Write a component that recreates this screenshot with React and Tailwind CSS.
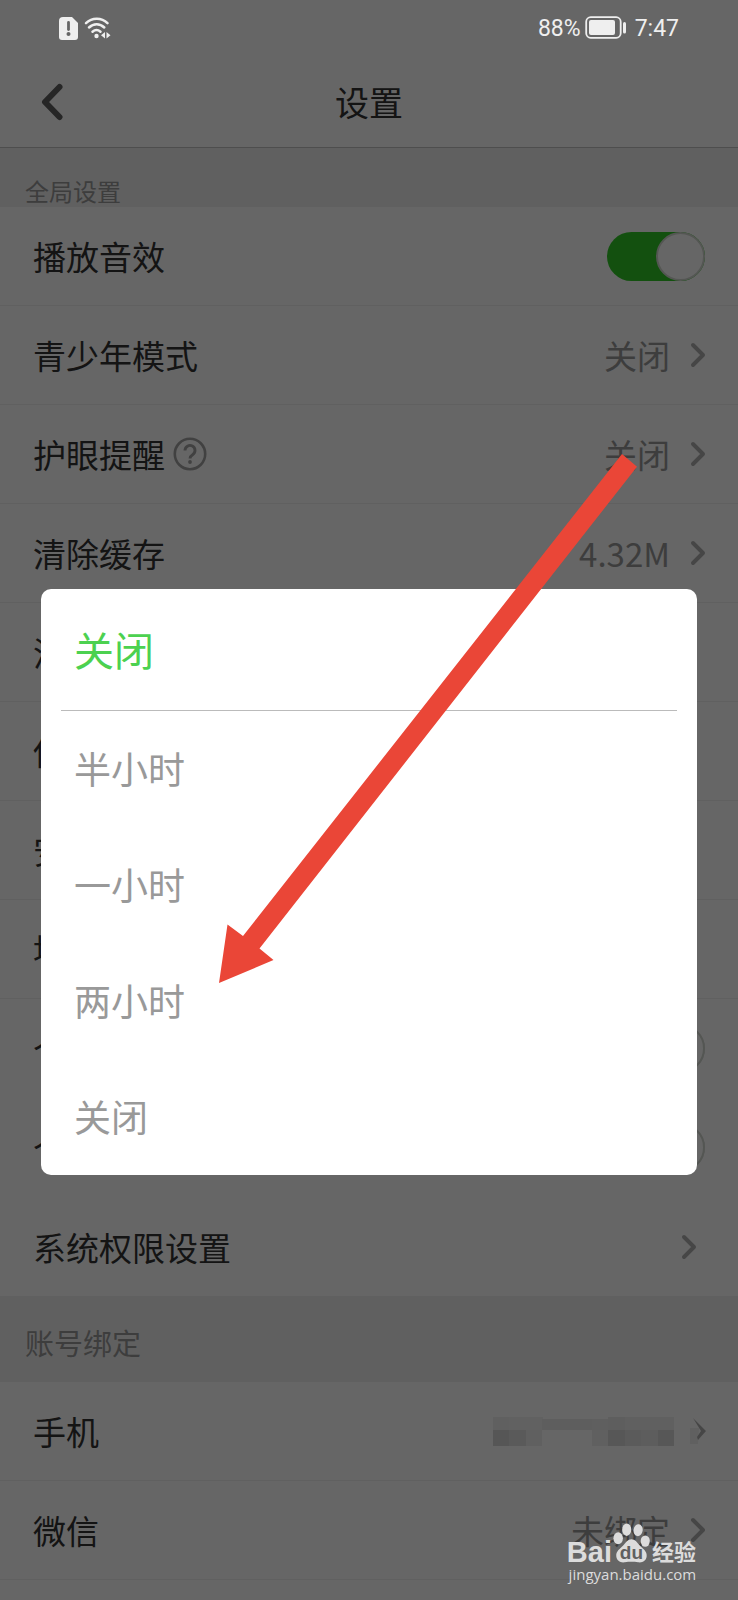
import { useState } from "react";

const generalRows = [
  { label: "播放音效", type: "switch", on: true },
  { label: "青少年模式", value: "关闭" },
  { label: "护眼提醒", value: "关闭", help: true },
  { label: "清除缓存", value: "4.32M" },
  { label: "消", inset: true },
  { label: "使", inset: true },
  { label: "安", inset: true },
  { label: "地", inset: true },
  { label: "个", type: "switch", plain: true },
  { label: "个", type: "switch", plain: true },
  { label: "系统权限设置", inset: true, plain: true },
];

const timeOptions = ["半小时", "一小时", "两小时", "关闭"];

const maskTop = ["#efefef", "#f3f3f3", "#f3f3f3", "#eaeaea", "#eaeaea", "#eaeaea", "#eeeeee", "#eaeaea", "#f0f0f0", "#f1f1f1", "#efefef"];
const maskBottom = ["#d6d6d6", "#e0e0e0", "#efefef", "#ffffff", "#ffffff", "#ffffff", "#f0f0f0", "#d9d9d9", "#e3e3e3", "#e9e9e9", "#dadada"];

const StatusBar = () => (
  <div className="absolute inset-x-0 top-0 z-20 flex h-14 items-center justify-between px-[59px] font-[Roboto,'Noto_Sans_CJK_SC',sans-serif] text-[23px] text-[#efefef]">
    <div className="flex items-center gap-1.5">
      <svg width="19" height="23" viewBox="0 0 19 23">
        <path d="M4 0h9l6 6v14a3 3 0 0 1-3 3H3a3 3 0 0 1-3-3V4a4 4 0 0 1 4-4Z" fill="#efefef" />
        <path d="M9.500 5.500v7" stroke="#666" strokeWidth="2.800" strokeLinecap="round" />
        <circle cx="9.500" cy="17" r="2" fill="#666" />
      </svg>
      <svg width="27" height="23" viewBox="0 0 27 23" fill="none" stroke="#efefef" strokeWidth="2.500" strokeLinecap="round">
        <path d="M2 6.200c6-6 15.500-6 21.500 0" />
        <path d="M5 10.500c4.500-4.300 10.800-4.300 15.300 0" />
        <path d="M8.500 14.700c2.500-2.200 5.500-2.200 8 0" />
        <circle cx="12.500" cy="19" r="2.200" fill="#efefef" stroke="none" />
        <path d="M21 15v6.500l-4-3.250zM22.500 15v6.500l4-3.250z" fill="#efefef" stroke="none" />
      </svg>
    </div>
    <div className="flex items-center">
      <span className="pt-0.5">88%</span>
      <svg className="ml-1 mr-2" width="42" height="24" viewBox="0 0 42 24">
        <rect x="1.200" y="1.200" width="34.500" height="20.600" rx="4.500" fill="none" stroke="#efefef" strokeWidth="1.800" />
        <rect x="4" y="4" width="26" height="15" rx="2" fill="#efefef" />
        <rect x="38" y="6" width="3" height="11.500" rx="1.500" fill="#efefef" />
      </svg>
      <span className="pt-0.5">7:47</span>
    </div>
  </div>
);

const Chevron = () => (
  <svg className="shrink-0" width="16" height="26" viewBox="0 0 16 26" fill="none" stroke="#b0b0b0" strokeWidth="4" strokeLinecap="round" strokeLinejoin="round">
    <path d="M3 3 13 13 3 23" />
  </svg>
);

// Flecha de la fila con el número oculto, tapada en parte por el mosaico
const MaskedChevron = () => (
  <svg className="shrink-0" width="16" height="26" viewBox="0 0 16 26">
    <path d="M0 10h9l-1 16H0Z" fill="#f0f0f0" />
    <path d="M3 0 16 13 8 22 7 19 11 13Z" fill="#b0b0b0" />
  </svg>
);

const HelpIcon = () => (
  <svg width="34" height="34" viewBox="0 0 34 34" fill="none" stroke="#a3a3a3">
    <circle cx="17" cy="17" r="15.200" strokeWidth="2.600" />
    <path d="M12 13.500a5 5 0 1 1 7.600 4.200c-1.900 1.200-2.600 1.900-2.600 3.800" strokeWidth="2.900" />
    <circle cx="17" cy="25" r="1.900" fill="#a3a3a3" stroke="none" />
  </svg>
);

const Switch = ({ label, defaultChecked }) => (
  <label className="relative mr-px block h-[49px] w-[98px]">
    <input type="checkbox" role="switch" aria-label={label} defaultChecked={defaultChecked} className="absolute inset-0 h-full w-full appearance-none rounded-full border-2 border-[#d8d8d8] bg-white checked:border-0 checked:bg-[#30c826]" />
    <span className="pointer-events-none absolute right-0 top-0 h-[49px] w-[49px] rounded-full border-2 border-[#d3d8d0] bg-white"></span>
  </label>
);

const MaskedNumber = () => (
  <svg width="181" height="30" viewBox="0 0 181 30" shapeRendering="crispEdges">
    {maskTop.map((color, i) => (
      <rect key={i} x={i * 16.45} y={i > 2 && i < 7 ? 3 : 1} width="16.600" height="13" fill={color} />
    ))}
    {maskBottom.map((color, i) => (
      <rect key={i} x={i * 16.45} y="14" width="16.600" height="16" fill={color} />
    ))}
  </svg>
);

const Row = ({ row }) => (
  <li className={`flex h-[99px] items-center justify-between bg-white pl-[33px] text-[33px] ${row.plain ? "" : "border-b border-[#f0f0f0]"} ${row.inset ? "pr-[41px]" : "pr-8"}`}>
    <div className="flex items-center gap-2">
      <span className="pt-0.5 text-[#333]">{row.label}</span>
      {row.help && (
        <button aria-label="护眼提醒说明">
          <HelpIcon />
        </button>
      )}
    </div>
    {row.type === "switch" ? (
      <Switch label={row.label} defaultChecked={row.on} />
    ) : (
      <button className={`flex items-center text-[#999] ${row.masked ? "gap-4" : "gap-5"}`} aria-label={row.label}>
        {row.masked ? <MaskedNumber /> : <span className="pt-0.5">{row.value}</span>}
        {row.masked ? <MaskedChevron /> : <Chevron />}
      </button>
    )}
  </li>
);

const TimerDialog = ({ selected, onSelect }) => (
  <div role="dialog" aria-label="护眼提醒" className="w-full rounded-[10px] bg-white">
    <h2 className="mx-5 flex h-[122px] items-center border-b border-[#bbb] px-[13px] pb-0.5 text-[40px] text-[#4cd150]">
      {selected}
    </h2>
    <ul>
      {timeOptions.map((option) => (
        <li key={option}>
          <button onClick={() => onSelect(option)} className="flex h-[116px] w-full items-center px-[33px] text-[37px] text-[#999]">
            {option}
          </button>
        </li>
      ))}
    </ul>
  </div>
);

const Watermark = () => (
  <div className="absolute bottom-4 right-10 z-30 flex flex-col items-center text-[#dcdcdc]">
    <div className="flex items-end pr-0.5">
      <span className="font-['Liberation_Sans',sans-serif] text-[29px] font-bold leading-6">Bai</span>
      <svg width="38" height="42" viewBox="0 0 40 42" fill="#dcdcdc">
        <ellipse cx="6.500" cy="16" rx="5" ry="6.300" />
        <ellipse cx="15.500" cy="7" rx="4.800" ry="6.500" />
        <ellipse cx="27.500" cy="7.500" rx="4.800" ry="6.300" transform="rotate(8 27.500 7.500)" />
        <ellipse cx="35" cy="19" rx="4.800" ry="6" />
        <path d="M20.500 17c4 0 6 3.500 8.500 6.500 3.500 3.800 8 6 7.500 11.500-.5 5-4.500 7-9 6.300-4.500-.7-9.500-.7-14 0-4.500.7-8.500-1.300-9-6.300-.5-5.500 4-7.700 7.500-11.500 2.500-3 4.500-6.500 8.500-6.500Z" />
        <text x="20.500" y="38" textAnchor="middle" fontFamily="Liberation Sans, sans-serif" fontSize="20" fontWeight="bold" fill="#606060">du</text>
      </svg>
      <span className="ml-0.5 pb-0.5 text-[22px] font-bold leading-6">经验</span>
    </div>
    <span className="font-['Open_Sans',sans-serif] text-[15px] leading-5">jingyan.baidu.com</span>
  </div>
);

export default function App() {
  const [selected, setSelected] = useState("关闭");

  return (
    <div className="relative h-screen w-full overflow-hidden bg-white font-['Noto_Sans_CJK_SC',sans-serif]">
      <StatusBar />

      {/* Cabecera */}
      <header className="grid h-[148px] grid-cols-[80px_1fr_80px] items-center border-b border-[#c4c4c4] bg-white pt-14">
        <button aria-label="返回" className="pl-10">
          <svg width="24" height="38" viewBox="0 0 24 38" fill="none" stroke="#606060" strokeWidth="6" strokeLinecap="round" strokeLinejoin="round">
            <path d="M19.500 4 5 19 19.500 34" />
          </svg>
        </button>
        <h1 className="text-center text-[34px] text-[#333]">设置</h1>
      </header>

      <main>
        <h2 className="flex h-[59px] items-end bg-[#f0f0f0] px-[25px] text-[24px] leading-8 text-[#999]">全局设置</h2>
        <ul>
          {generalRows.map((row, index) => (
            <Row key={index} row={row} />
          ))}
        </ul>
        <h2 className="flex h-[86px] items-center bg-[#f0f0f0] px-[25px] pt-2 text-[29px] text-[#999]">账号绑定</h2>
        <ul>
          <Row row={{ label: "手机", masked: true }} />
          <Row row={{ label: "微信", value: "未绑定" }} />
        </ul>
      </main>

      {/* Capa oscura con el selector de tiempo */}
      <div className="absolute inset-0 z-10 flex items-start bg-black/60 px-[41px] pt-[589px]">
        <TimerDialog selected={selected} onSelect={setSelected} />
      </div>

      {/* Flecha */}
      <svg className="pointer-events-none absolute left-[219px] top-[454px] z-20" width="420" height="530" viewBox="0 0 420 530">
        <path d="M403 0 418 12.700 40.500 494.500 54.500 506 0 529 8.500 470.500 24 482Z" fill="#ea4637" />
      </svg>

      <Watermark />
    </div>
  );
}
